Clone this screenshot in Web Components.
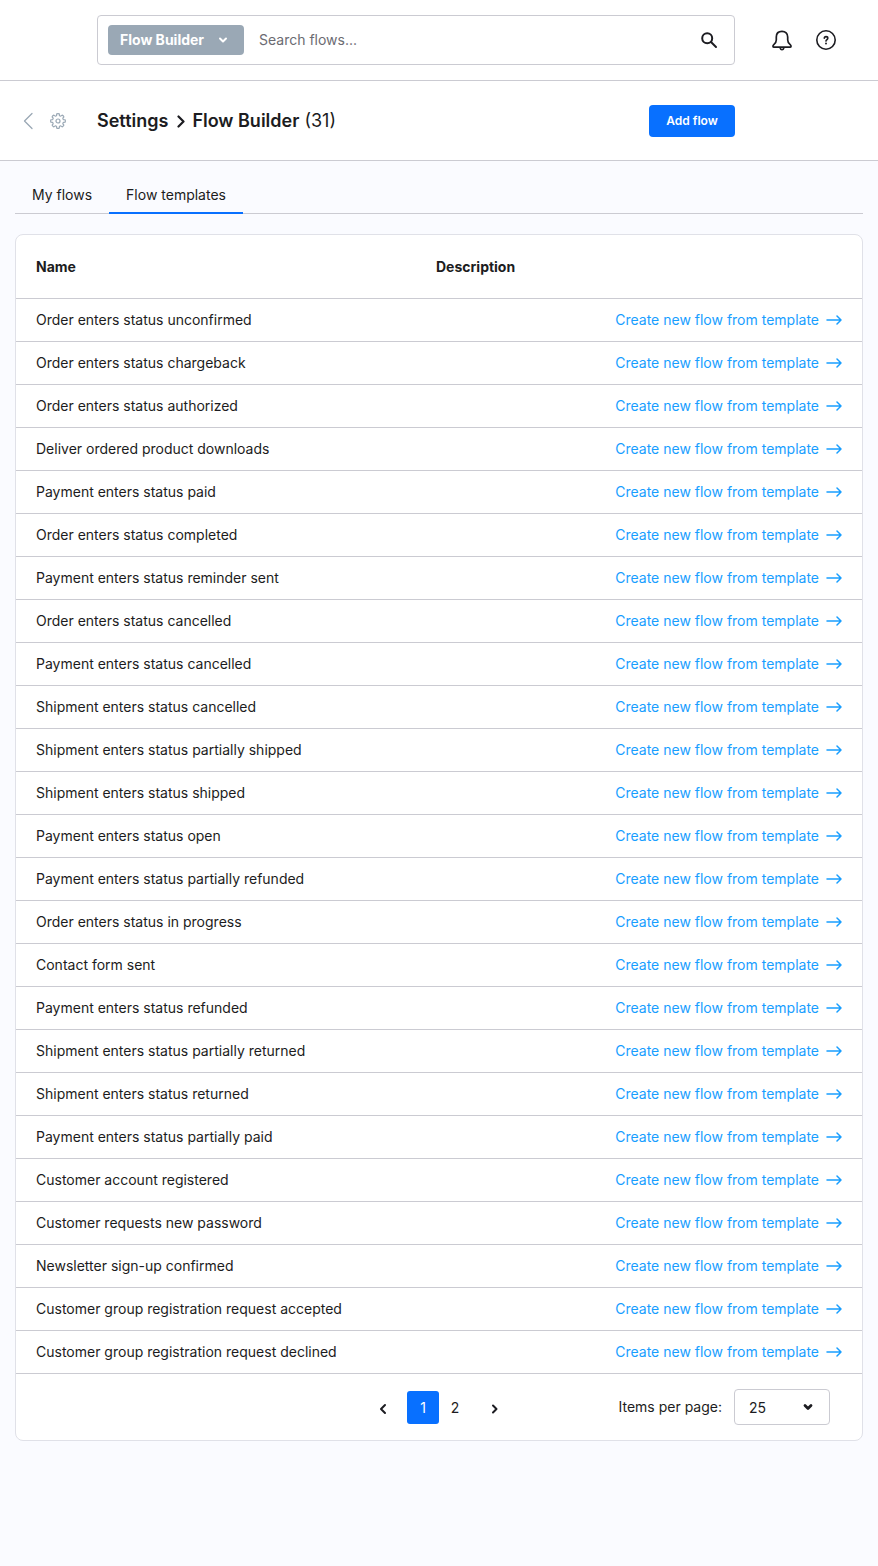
<!DOCTYPE html>
<html lang="en">
<head>
<meta charset="utf-8">
<meta name="viewport" content="width=device-width, initial-scale=1">
<title>Flow Builder</title>
<style>
  :root {
    --ink: #1c1c21;
    --line: #cbcbd2;
    --line-soft: #e0e1e8;
    --brand: #0870ff;
    --link: #189eff;
    --muted: #9aa8b5;
    --surface: #fff;
    --page: #fafbff;
  }
  html { background: var(--page); }
  body {
    margin: 0;
    color: var(--ink);
    background: var(--page);
    font: 14px/20px Inter, "Noto Sans", sans-serif;
  }
</style>
</head>
<body>
<flow-app></flow-app>

<template id="search-bar">
  <style>
    :host { display: grid; grid-template-columns: 97px 1fr 143px; align-items: center; height: 80px; background: var(--surface); border-bottom: 1px solid var(--line); }
    form { grid-column: 2; display: flex; align-items: center; box-sizing: border-box; height: 50px; padding: 0 10px; border: 1px solid var(--line); border-radius: 4px; }
    button { display: flex; align-items: center; justify-content: center; padding: 0; border: 0; background: none; color: inherit; font: inherit; cursor: pointer; }
    .scope { height: 30px; width: 136px; flex: none; justify-content: space-between; padding: 0 16px 0 12px; background: var(--muted); color: #fff; font-weight: 700; border-radius: 4px; }
    input { flex: 1; min-width: 0; height: 40px; padding: 0 15px 2px; border: 0; outline: 0; background: none; color: inherit; font: inherit; }
    input::placeholder { color: #6b6b72; opacity: 1; }
    .go { width: 30px; height: 30px; }
    nav { display: flex; gap: 20px; padding-left: 35px; }
    nav button { width: 24px; height: 24px; }
    svg { fill: none; stroke: currentColor; stroke-linecap: round; stroke-linejoin: round; display: block; }
  </style>
  <form role="search">
    <button class="scope" type="button">Flow Builder
      <svg width="10" height="10" viewBox="0 0 10 10" stroke-width="2"><path d="M2 3.5 5 6.5 8 3.5"/></svg>
    </button>
    <input type="search" aria-label="Search flows" placeholder="Search flows...">
    <button class="go" type="submit" aria-label="Search">
      <svg width="18" height="18" viewBox="0 0 18 18" stroke-width="2"><circle cx="7.2" cy="7.2" r="5"/><path d="m11 11 5 5"/></svg>
    </button>
  </form>
  <nav aria-label="Tools">
    <button type="button" aria-label="Notifications">
      <svg width="22" height="22" viewBox="0 0 22 22" stroke-width="1.7"><path d="M11 2.300C7.500 2.300 5.300 4.600 5.300 7.900V11c0 2.400-1 3.500-2.500 4.700-1.300 1.100-1 2.500.2 2.500h16c1.200 0 1.500-1.400.2-2.500C17.700 14.500 16.700 13.400 16.700 11V7.900C16.700 4.600 14.500 2.300 11 2.300Z"/><path d="M9.300 19.400c.4 1.700 3 1.700 3.400 0"/></svg>
    </button>
    <button type="button" aria-label="Help">
      <svg width="22" height="22" viewBox="0 0 22 22" stroke-width="1.600"><circle cx="11" cy="11" r="9.200"/><path d="M9.300 9.300c0-2.300 3.500-2.200 3.500-.1 0 1.300-1.800 1.400-1.800 2.900"/><path d="M11 14.400v.1" stroke-width="1.900"/></svg>
    </button>
  </nav>
</template>

<template id="page-head">
  <style>
    :host { display: grid; grid-template-columns: 97px 1fr auto 143px; align-items: center; height: 79px; background: var(--surface); border-bottom: 1px solid var(--line); }
    .back { display: flex; align-items: center; gap: 14px; padding-left: 20px; color: var(--muted); }
    .back a { display: flex; color: inherit; }
    h1 { display: flex; align-items: center; margin: 0; font-size: 18px; line-height: 24px; font-weight: 600; white-space: pre; }
    h1 svg { margin: 0 6px 0 8px; }
    h1 small { font-size: 18px; font-weight: 400; }
    button { width: 86px; height: 32px; padding: 0; border: 0; border-radius: 4px; background: var(--brand); color: #fff; font: 600 12px/16px Inter, sans-serif; cursor: pointer; }
    svg { fill: none; stroke: currentColor; stroke-linecap: round; stroke-linejoin: round; display: block; }
  </style>
  <div class="back">
    <a href="#settings" aria-label="Back"><svg width="16" height="18" viewBox="0 0 16 18" stroke-width="1.300"><path d="M12 1.500 4.500 9l7.500 7.500"/></svg></a>
    <svg width="16" height="16" viewBox="0 0 16 16" stroke-width="1.200"><path id="cog"/><circle cx="8" cy="8" r="2"/></svg>
  </div>
  <h1><slot name="parent"></slot><svg width="10" height="14" viewBox="0 0 10 14" stroke-width="2.200"><path d="m2.500 2.500 5 5-5 5"/></svg><slot></slot><small> <slot name="count"></slot></small></h1>
  <button type="button">Add flow</button>
</template>

<template id="tab-bar">
  <style>
    :host { display: flex; border-bottom: 1px solid var(--line); }
    a { box-sizing: border-box; height: 38px; padding: 9px 17px 0; margin-bottom: -1px; color: inherit; text-decoration: none; }
    a[aria-current] { border-bottom: 2px solid var(--brand); }
  </style>
  <a href="#flows">My flows</a><a href="#templates" aria-current="page">Flow templates</a>
</template>

<template id="template-list">
  <style>
    :host { display: block; background: var(--surface); border: 1px solid var(--line-soft); border-radius: 8px; }
    table { width: 100%; border-collapse: separate; border-spacing: 0; table-layout: fixed; }
    th, td { height: 42px; padding: 0 20px; text-align: left; border-bottom: 1px solid var(--line); }
    th { height: 63px; font-weight: 700; }
    th:first-child { width: 360px; }
    td:last-child { text-align: right; }
    a { display: flex; align-items: center; justify-content: flex-end; gap: 7px; color: var(--link); text-decoration: none; white-space: nowrap; }
    svg { fill: none; stroke: currentColor; stroke-width: 1.500; stroke-linecap: round; stroke-linejoin: round; }
  </style>
  <table>
    <thead><tr><th scope="col">Name</th><th scope="col">Description</th></tr></thead>
    <tbody></tbody>
  </table>
  <slot></slot>
</template>

<template id="list-pager">
  <style>
    :host { display: grid; grid-template-columns: 1fr auto 1fr; align-items: center; height: 66px; }
    nav { grid-column: 2; display: flex; align-items: center; }
    button { display: flex; align-items: center; justify-content: center; box-sizing: border-box; width: 32px; height: 33px; padding: 2px 0 0; border: 0; border-radius: 3px; background: none; color: inherit; font: inherit; cursor: pointer; }
    .step { width: 40px; padding-top: 4px; }
    .prev { padding-right: 8px; }
    .next { padding-left: 8px; }
    [aria-current] { background: var(--brand); color: #fff; }
    .size { display: flex; align-items: center; justify-content: flex-end; gap: 12px; padding-right: 32px; }
    .field { display: grid; align-items: center; }
    .field > * { grid-area: 1 / 1; }
    select { appearance: none; width: 96px; height: 36px; padding: 1px 14px 0; border: 1px solid var(--line); border-radius: 4px; background: var(--surface); color: inherit; font: inherit; }
    .field svg { justify-self: end; margin-right: 16px; pointer-events: none; }
    svg { fill: none; stroke: currentColor; stroke-linecap: round; stroke-linejoin: round; }
  </style>
  <nav aria-label="Pages">
    <button class="step prev" type="button" aria-label="Previous page"><svg width="10" height="12" viewBox="0 0 10 12" stroke-width="2"><path d="M7 2 3 6l4 4"/></svg></button>
    <button type="button" aria-current="page">1</button>
    <button type="button">2</button>
    <button class="step next" type="button" aria-label="Next page"><svg width="10" height="12" viewBox="0 0 10 12" stroke-width="2"><path d="m3 2.500 3.500 3.500L3 9.500"/></svg></button>
  </nav>
  <div class="size">
    <label for="size">Items per page:</label>
    <div class="field">
      <select id="size"><option>10</option><option selected>25</option><option>50</option></select>
      <svg width="12" height="12" viewBox="0 0 12 12" stroke-width="2.800"><path d="m3 4.500 3 3 3-3"/></svg>
    </div>
  </div>
</template>

<template id="flow-app">
  <style>
    :host { display: block; }
    main { padding: 15px 15px 125px; }
    template-list { margin-top: 20px; }
  </style>
  <search-bar></search-bar>
  <page-head><span slot="parent">Settings</span>Flow Builder<span slot="count">(31)</span></page-head>
  <main>
    <tab-bar></tab-bar>
    <template-list><list-pager></list-pager></template-list>
  </main>
</template>

<script>
  class TemplateElement extends HTMLElement {
    constructor() {
      super();
      const source = document.getElementById(this.localName);
      this.attachShadow({ mode: "open" }).append(source.content.cloneNode(true));
    }
  }

  class PageHead extends TemplateElement {
    constructor() {
      super();
      // Eight rounded teeth around the hub of the gear.
      const pt = (r, deg) => {
        const a = deg * Math.PI / 180;
        return (8 + r * Math.cos(a)).toFixed(2) + " " + (8 + r * Math.sin(a)).toFixed(2);
      };
      let d = "";
      for (let i = 0; i < 8; i++) {
        const c = i * 45;
        d += (i ? "L" : "M") + pt(5.6, c - 15) + "L" + pt(7.2, c - 10) + "Q" + pt(7.6, c) + " " + pt(7.2, c + 10) + "L" + pt(5.6, c + 15);
        d += "Q" + pt(5.2, c + 22.5) + " " + pt(5.6, c + 30);
      }
      this.shadowRoot.getElementById("cog").setAttribute("d", d + "Z");
    }
  }

  class TemplateList extends TemplateElement {
    static names = [
      "Order enters status unconfirmed", "Order enters status chargeback", "Order enters status authorized",
      "Deliver ordered product downloads", "Payment enters status paid", "Order enters status completed",
      "Payment enters status reminder sent", "Order enters status cancelled", "Payment enters status cancelled",
      "Shipment enters status cancelled", "Shipment enters status partially shipped", "Shipment enters status shipped",
      "Payment enters status open", "Payment enters status partially refunded", "Order enters status in progress",
      "Contact form sent", "Payment enters status refunded", "Shipment enters status partially returned",
      "Shipment enters status returned", "Payment enters status partially paid", "Customer account registered",
      "Customer requests new password", "Newsletter sign-up confirmed",
      "Customer group registration request accepted", "Customer group registration request declined"
    ];
    constructor() {
      super();
      this.shadowRoot.querySelector("tbody").innerHTML = TemplateList.names.map(name => `
        <tr><td>${name}</td><td><a href="#create">Create new flow from template
        <svg width="16" height="12" viewBox="0 0 16 12"><path d="M1 6h14M11 2l4 4-4 4"/></svg></a></td></tr>`).join("");
    }
  }

  customElements.define("search-bar", class extends TemplateElement {});
  customElements.define("page-head", PageHead);
  customElements.define("tab-bar", class extends TemplateElement {});
  customElements.define("list-pager", class extends TemplateElement {});
  customElements.define("template-list", TemplateList);
  customElements.define("flow-app", class extends TemplateElement {});
</script>
</body>
</html>
